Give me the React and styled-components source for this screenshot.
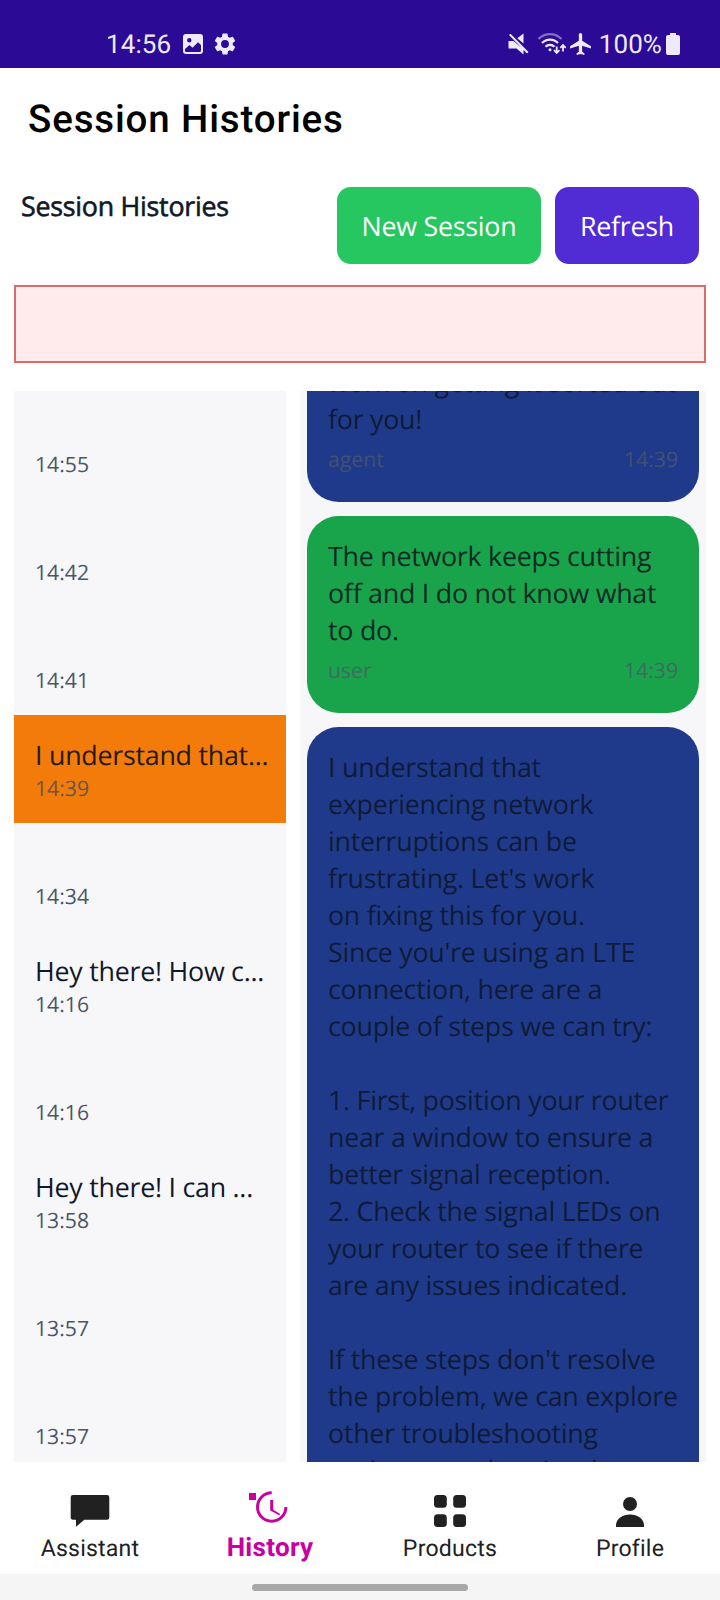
import React from "react";
import styled, { createGlobalStyle } from "styled-components";

const Global = createGlobalStyle`
  * { box-sizing: border-box; }
  body { margin: 0; background: #fff; }
`;

const Screen = styled.div`
  width: 720px;
  height: 1600px;
  overflow: hidden;
  display: flex;
  flex-direction: column;
  background: #fff;
  font-family: "Open Sans", sans-serif;
  font-size: 26.8px;
  line-height: 37px;
  letter-spacing: -0.25px;
  text-rendering: geometricPrecision;
  color: #111827;
  white-space: nowrap;
`;

const StatusBar = styled.header`
  flex: none;
  height: 68px;
  padding: 28px 40px 0 106px;
  display: flex;
  justify-content: space-between;
  background: #2b0a95;
  color: #efeafb;
  font: 400 26px/32px Roboto, sans-serif;
  letter-spacing: 0.1px;
`;

const StatusGroup = styled.div`
  display: flex;
  align-items: center;
  height: 32px;
`;

const StatusIcon = styled.svg`
  flex: none;
  display: block;
  margin-left: ${(p) => p.$gap || 0}px;
`;

const StatusText = styled.span`
  padding-top: 2px;
  margin-left: ${(p) => p.$gap || 0}px;
`;

const TitleBar = styled.div`
  flex: none;
  height: 98px;
  padding: 6px 28px 0;
  display: flex;
  align-items: center;
  color: #000;
  font: 500 38.5px/46px Roboto, sans-serif;
  letter-spacing: 0.85px;
`;

const Toolbar = styled.div`
  flex: none;
  height: 119px;
  padding: 21px 21px 0;
  display: flex;
  gap: 14px;
`;

const SectionTitle = styled.h2`
  flex: 1;
  margin: 0;
  font-size: 26.8px;
  font-weight: 400;
  -webkit-text-stroke: 0.6px #111827;
`;

const Button = styled.button`
  width: ${(p) => p.$width}px;
  height: 77px;
  padding: 0;
  border: 0;
  border-radius: 14px;
  background: ${(p) => p.$color};
  color: #fff;
  font: inherit;
  letter-spacing: inherit;
  text-rendering: inherit;
`;

const Alert = styled.div`
  flex: none;
  height: 78px;
  margin: 0 14px 28px;
  border: 2px solid #d96c6c;
  background: #ffebec;
`;

const Panels = styled.main`
  flex: none;
  height: 1071px;
  padding: 0 14px;
  display: grid;
  grid-template-columns: 272px 406px;
  gap: 14px;
`;

const Panel = styled.section`
  height: 1071px;
  overflow: hidden;
  background: #f7f7fa;
`;

const Session = styled.div`
  height: 108px;
  padding: 21px 0 0 21px;
  background: ${(p) => (p.$active ? "#f27b0a" : "transparent")};
  color: ${(p) => (p.$active ? "#241a18" : "#111827")};
`;

const SessionName = styled.div`
  height: 38px;
`;

const Meta = styled.div`
  display: flex;
  justify-content: space-between;
  font-size: 21.2px;
  line-height: 29px;
  letter-spacing: 0;
  color: ${(p) => p.$color};
`;

const Thread = styled.div`
  display: flex;
  flex-direction: column;
  gap: 14px;
  padding: 0 7px;
  margin-top: -49px;
`;

const Bubble = styled.article`
  flex: none;
  display: flex;
  flex-direction: column;
  gap: 8px;
  padding: 21px 21px 28px;
  border-radius: 31.5px;
  background: ${(p) => (p.$user ? "#19a44b" : "#1f3a8a")};
  color: ${(p) => (p.$user ? "#0b2a24" : "#0f1a38")};
`;

const Message = styled.div`
  white-space: pre;
`;

const Nav = styled.nav`
  flex: none;
  height: 112px;
  padding-top: 28px;
  display: grid;
  grid-template-columns: repeat(4, 180px);
  background: #fff;
`;

const Tab = styled.div`
  display: flex;
  flex-direction: column;
  align-items: center;
  color: ${(p) => (p.$active ? "#c800a1" : "#212121")};
`;

const TabLabel = styled.span`
  margin-top: ${(p) => (p.$active ? 1 : 2)}px;
  font: ${(p) => (p.$active ? "700 26px" : "400 23.1px")}/30px Roboto, sans-serif;
  letter-spacing: ${(p) => (p.$active ? 0.3 : 0.2)}px;
`;

const GestureBar = styled.footer`
  flex: none;
  height: 26px;
  padding-top: 10px;
  display: flex;
  justify-content: center;
  background: #f5f5f5;
`;

const Handle = styled.div`
  width: 216px;
  height: 7px;
  border-radius: 4px;
  background: #a8a8a8;
`;

const sessions = [
  ["", "14:55"],
  ["", "14:42"],
  ["", "14:41"],
  ["I understand that...", "14:39", true],
  ["", "14:34"],
  ["Hey there! How c...", "14:16"],
  ["", "14:16"],
  ["Hey there! I can ...", "13:58"],
  ["", "13:57"],
  ["", "13:57"],
];

const messages = [
  { from: "agent", time: "14:39", text: "work on getting it sorted out\nfor you!" },
  {
    from: "user",
    time: "14:39",
    text: "The network keeps cutting\noff and I do not know what\nto do.",
  },
  {
    from: "agent",
    time: "14:39",
    text: `I understand that
experiencing network
interruptions can be
frustrating. Let's work
on fixing this for you.
Since you're using an LTE
connection, here are a
couple of steps we can try:

1. First, position your router
near a window to ensure a
better signal reception.
2. Check the signal LEDs on
your router to see if there
are any issues indicated.

If these steps don't resolve
the problem, we can explore
other troubleshooting
options or ask a view here`,
  },
];

const icons = {
  Assistant: (
    <path d="M4 5h34a2.300 2.300 0 0 1 2.300 2.300v20.200a2.300 2.300 0 0 1-2.300 2.300H15.300L7 36.800v-7H4a2.300 2.300 0 0 1-2.300-2.300V7.300A2.300 2.300 0 0 1 4 5z" />
  ),
  History: (
    <>
      <path d="M0 3h7v7H0z" />
      <path d="M22.700 2.800A14.200 14.200 0 1 0 36.900 17" fill="none" stroke="currentColor" strokeWidth="3" />
      <path d="M21.200 10h3v9.700l7.100 4.200-1 1.400-9.100-4.800z" />
    </>
  ),
  Products: (
    <>
      <rect x="5" y="5" width="12.8" height="12.8" rx="3.5" />
      <rect x="24.2" y="5" width="12.8" height="12.8" rx="3.5" />
      <rect x="5" y="24.2" width="12.8" height="12.8" rx="3.5" />
      <rect x="24.2" y="24.2" width="12.8" height="12.8" rx="3.5" />
    </>
  ),
  Profile: (
    <>
      <circle cx="21" cy="14" r="7" />
      <path d="M7 37v-2c0-6 6.500-10.600 14-10.600s14 4.600 14 10.600v2z" />
    </>
  ),
};

export default function App() {
  return (
    <Screen>
      <Global />
      <StatusBar>
        <StatusGroup>
          <StatusText>14:56</StatusText>
          <StatusIcon $gap={12} width="20" height="20" viewBox="0 0 20 20">
            <path
              fill="currentColor"
              fillRule="evenodd"
              d="M3 0h14a3 3 0 0 1 3 3v14a3 3 0 0 1-3 3H3a3 3 0 0 1-3-3V3a3 3 0 0 1 3-3zM6.300 4a2.200 2.200 0 1 0 0 4.400a2.200 2.200 0 0 0 0-4.400zM2 15v1.500A1.500 1.500 0 0 0 3.500 18h13a1.500 1.500 0 0 0 1.500-1.500V11l-3-2.700-5.500 5.400L6.500 11z"
            />
          </StatusIcon>
          <StatusIcon $gap={9} width="26" height="26" viewBox="0 0 24 24">
            <path
              fill="currentColor"
              d="M19.140 12.940c.04-.3.060-.61.060-.94 0-.32-.02-.64-.07-.94l2.030-1.580a.49.49 0 0 0 .12-.61l-1.920-3.320a.488.488 0 0 0-.59-.22l-2.390.96c-.5-.38-1.030-.7-1.620-.94l-.36-2.540a.484.484 0 0 0-.48-.41h-3.840c-.24 0-.43.17-.47.41l-.36 2.540c-.59.24-1.130.57-1.620.94l-2.390-.96c-.22-.08-.47 0-.59.22L2.740 8.870c-.12.21-.08.47.12.61l2.030 1.580c-.05.3-.09.63-.09.94s.02.64.07.94l-2.030 1.580a.49.49 0 0 0-.12.61l1.920 3.320c.12.22.37.29.59.22l2.390-.96c.5.38 1.030.7 1.620.94l.36 2.540c.05.24.24.41.48.41h3.840c.24 0 .44-.17.47-.41l.36-2.540c.59-.24 1.130-.56 1.620-.94l2.390.96c.22.08.47 0 .59-.22l1.920-3.320c.12-.22.07-.47-.12-.61zM12 15.600A3.600 3.600 0 1 1 12 8.400a3.600 3.600 0 0 1 0 7.200z"
            />
          </StatusIcon>
        </StatusGroup>
        <StatusGroup>
          <StatusIcon width="21" height="22" viewBox="0 0 21 22">
            <path
              fill="currentColor"
              d="M15.500 .5v10L9.300 5.200zM.5 8h5L15.500 16.500V21.500l-7-6h-8zM1 2L2.500.7 20.500 19l-1.500 1.500z"
            />
          </StatusIcon>
          <StatusIcon $gap={8} width="30" height="24" viewBox="0 0 30 24">
            <g fill="none" stroke="currentColor" strokeWidth="2.2">
              <path d="M1.500 7a16 16 0 0 1 23 0" opacity=".45" />
              <path d="M5 11a11 11 0 0 1 16 0" />
              <path d="M8.500 14.700a6.500 6.500 0 0 1 9 0" />
              <path d="M19.700 14.500v6M17 18.200l2.700 2.700 2.700-2.700M26 19.500v-6M23.300 15.800l2.700-2.700 2.700 2.700" strokeWidth="1.8" />
            </g>
            <circle cx="13" cy="17.800" r="1.500" fill="currentColor" />
          </StatusIcon>
          <StatusIcon $gap={3} width="21" height="22" viewBox="2 2 19 20">
            <path
              fill="currentColor"
              d="M21 16v-2l-8-5V3.500c0-.83-.67-1.500-1.500-1.500S10 2.670 10 3.500V9l-8 5v2l8-2.500V19l-2 1.500V22l3.500-1 3.500 1v-1.500L13 19v-5.500l8 2.500z"
            />
          </StatusIcon>
          <StatusText $gap={8}>100%</StatusText>
          <StatusIcon $gap={4} width="14" height="22" viewBox="0 0 14 22">
            <path
              fill="currentColor"
              d="M4 0h6v2h2a2 2 0 0 1 2 2v16a2 2 0 0 1-2 2H2a2 2 0 0 1-2-2V4a2 2 0 0 1 2-2h2z"
            />
          </StatusIcon>
        </StatusGroup>
      </StatusBar>
      <TitleBar>Session Histories</TitleBar>
      <Toolbar>
        <SectionTitle>Session Histories</SectionTitle>
        <Button $width={204} $color="#26c660">New Session</Button>
        <Button $width={144} $color="#512bd4">Refresh</Button>
      </Toolbar>
      <Alert />
      <Panels>
        <Panel>
          {sessions.map(([name, time, active], i) => (
            <Session key={i} $active={active}>
              <SessionName>{name}</SessionName>
              <Meta $color={active ? "#6b5648" : "#4b5567"}>{time}</Meta>
            </Session>
          ))}
        </Panel>
        <Panel>
          <Thread>
            {messages.map((m, i) => (
              <Bubble key={i} $user={m.from === "user"}>
                <Message>{m.text}</Message>
                <Meta $color={m.from === "user" ? "#3f6b60" : "#435072"}>
                  <span>{m.from}</span>
                  <span>{m.time}</span>
                </Meta>
              </Bubble>
            ))}
          </Thread>
        </Panel>
      </Panels>
      <Nav>
        {Object.entries(icons).map(([label, drawing]) => (
          <Tab key={label} $active={label === "History"}>
            <svg width="42" height="42" viewBox="0 0 42 42" fill="currentColor">
              {drawing}
            </svg>
            <TabLabel $active={label === "History"}>{label}</TabLabel>
          </Tab>
        ))}
      </Nav>
      <GestureBar>
        <Handle />
      </GestureBar>
    </Screen>
  );
}
